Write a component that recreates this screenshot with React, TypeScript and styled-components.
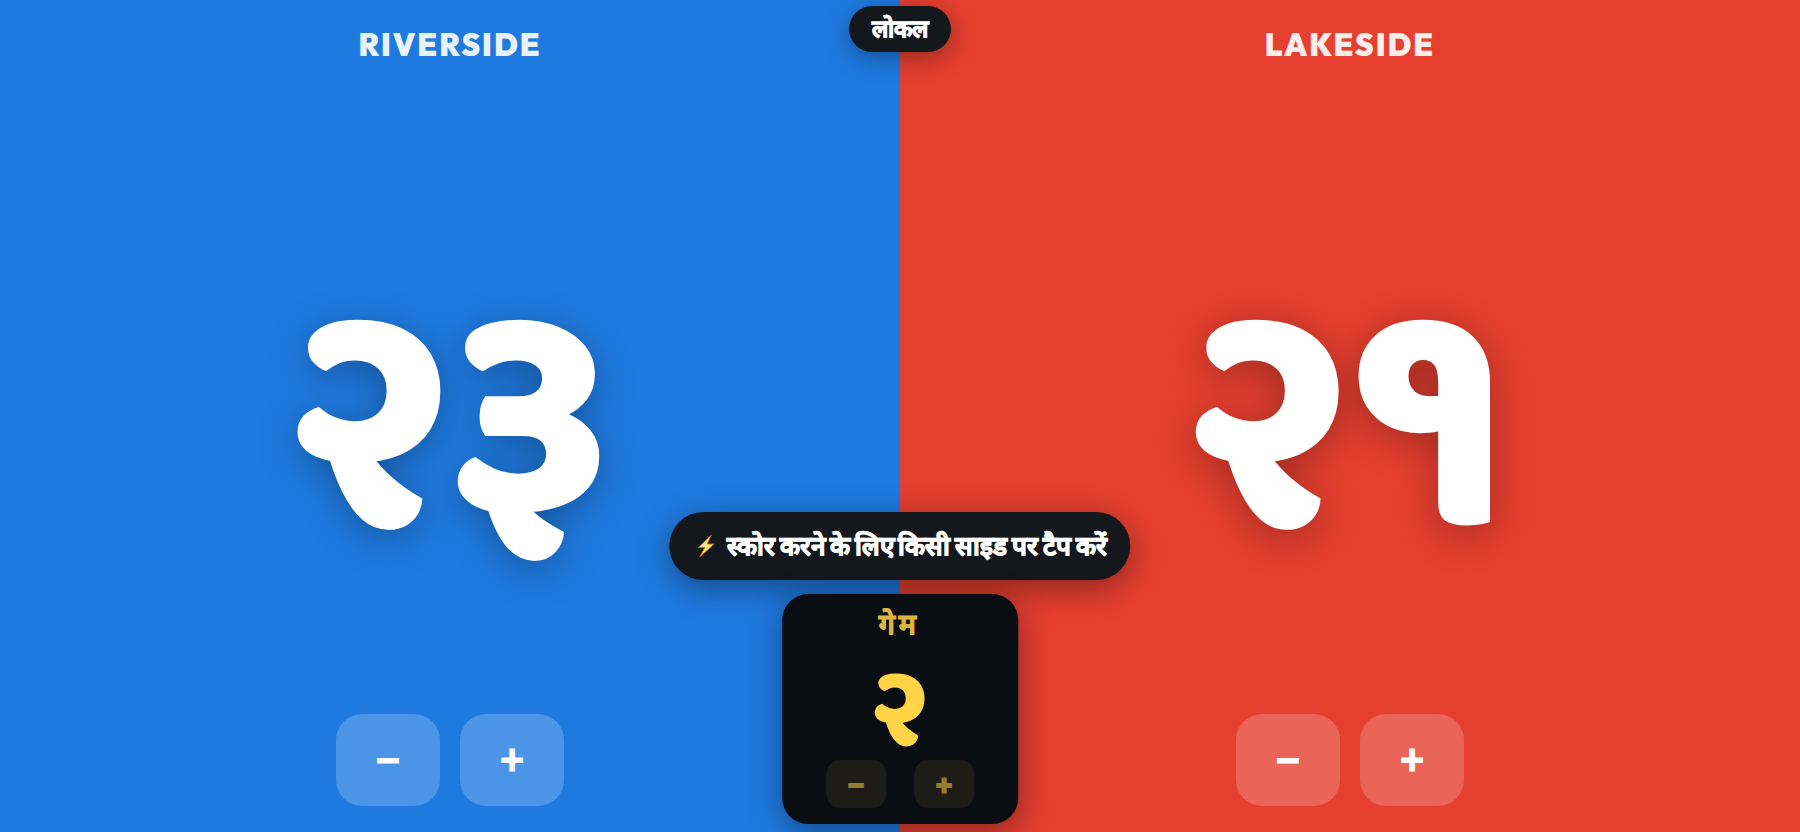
import React, { useState } from 'react';
import styled, { createGlobalStyle } from 'styled-components';

const GlobalStyle = createGlobalStyle`
  *, *::before, *::after { box-sizing: border-box; }
  body {
    margin: 0;
    font-family: 'Outfit', sans-serif;
  }
  button { font: inherit; cursor: pointer; }
`;

const numerals = `font-family: 'Outfit', 'Baloo 2', 'Noto Sans', sans-serif;`;

/* The fallback Devanagari face has no heavy cut, so a stroke thickens it. */
const heavyDevanagari = `-webkit-text-stroke: 1px currentColor;`;

const Board = styled.main`
  position: relative;
  display: grid;
  grid-template-columns: 1fr 1fr;
  min-height: 100vh;
  overflow: hidden;
`;

const Side = styled.section<{ $color: string }>`
  display: flex;
  flex-direction: column;
  align-items: center;
  padding: 24px 24px 26px;
  background: ${(p) => p.$color};
  color: #fff;
`;

const TeamName = styled.h2`
  margin: 0;
  font-size: 31px;
  line-height: 42px;
  font-weight: 900;
  letter-spacing: 2px;
  opacity: 0.9;
`;

const Score = styled.div`
  flex: 1;
  display: flex;
  align-items: center;
  padding-top: 30px;
  ${numerals}
  font-size: 316px;
  line-height: 316px;
  font-weight: 800;
  text-shadow: 0 8px 40px rgba(0, 0, 0, 0.3);
`;

const Controls = styled.div<{ $gap: number }>`
  display: flex;
  gap: ${(p) => p.$gap}px;
`;

const SideButton = styled.button`
  display: grid;
  place-items: center;
  width: 104px;
  height: 92px;
  padding: 0 0 2px;
  border: 0;
  border-radius: 26px;
  background: rgba(255, 255, 255, 0.2);
  color: #fff;
  font-size: 48px;
  font-weight: 600;
`;

const ModePill = styled.button`
  position: absolute;
  top: 6px;
  left: 50%;
  transform: translateX(-50%);
  height: 46px;
  padding: 0 23px 2px;
  border: 0;
  border-radius: 23px;
  background: #14171c;
  color: #fff;
  font-size: 24px;
  line-height: 44px;
  font-weight: 800;
  white-space: nowrap;
  ${heavyDevanagari}
  box-shadow: 0 6px 24px rgba(0, 0, 0, 0.35);
`;

const BottomStack = styled.div`
  position: absolute;
  bottom: 8px;
  left: 50%;
  transform: translateX(-50%);
  display: flex;
  flex-direction: column;
  align-items: center;
  gap: 14px;
`;

const Hint = styled.div`
  display: flex;
  align-items: center;
  gap: 8px;
  height: 68px;
  padding: 0 24px;
  border-radius: 34px;
  background: #14171c;
  color: #fff;
  font-size: 26px;
  line-height: 40px;
  font-weight: 800;
  white-space: nowrap;
  ${heavyDevanagari}
  box-shadow: 0 8px 32px rgba(0, 0, 0, 0.4);
`;

const GameCard = styled.section`
  display: flex;
  flex-direction: column;
  align-items: center;
  width: 236px;
  height: 230px;
  padding: 12px 0 16px;
  border-radius: 26px;
  background: #0a0d12;
  color: #ffd447;
  box-shadow: 0 8px 32px rgba(0, 0, 0, 0.4);
`;

const GameLabel = styled.h3`
  margin: 0;
  font-size: 28px;
  line-height: 36px;
  font-weight: 700;
  letter-spacing: 4px;
  ${heavyDevanagari}
  opacity: 0.85;
`;

const GameScore = styled.div`
  flex: 1;
  display: flex;
  align-items: center;
  padding-top: 6px;
  ${numerals}
  font-size: 110px;
  line-height: 104px;
  font-weight: 800;
`;

const GameButton = styled.button`
  display: grid;
  place-items: center;
  width: 60px;
  height: 48px;
  padding: 0;
  border: 0;
  border-radius: 14px;
  background: rgba(255, 212, 71, 0.08);
  color: rgba(255, 212, 71, 0.55);
  font-size: 32px;
  font-weight: 900;
`;

function Bolt() {
  return (
    <svg width="26" height="24" viewBox="-3 0 26 24" aria-hidden="true">
      <defs>
        <linearGradient id="bolt" x1="0" y1="0" x2="1" y2="1">
          <stop offset="0" stopColor="#f79a0b" />
          <stop offset="0.5" stopColor="#fff3a0" />
          <stop offset="1" stopColor="#f39a12" />
        </linearGradient>
      </defs>
      <path d="M15 1 2 13.500H8.500L3.500 23 18 10H11z" fill="url(#bolt)" stroke="#b87008" strokeWidth="1" strokeLinejoin="round" />
    </svg>
  );
}

const toHindi = (n: number) => new Intl.NumberFormat('hi-IN-u-nu-deva').format(n);

function Team({ name, color, initial }: { name: string; color: string; initial: number }) {
  const [score, setScore] = useState(initial);
  return (
    <Side $color={color}>
      <TeamName>{name}</TeamName>
      <Score>{toHindi(score)}</Score>
      <Controls $gap={20}>
        <SideButton onClick={() => setScore(Math.max(0, score - 1))}>−</SideButton>
        <SideButton onClick={() => setScore(score + 1)}>+</SideButton>
      </Controls>
    </Side>
  );
}

export default function App() {
  const [game, setGame] = useState(2);
  return (
    <Board lang="hi">
      <GlobalStyle />
      <Team name="RIVERSIDE" color="#1f7ae0" initial={23} />
      <Team name="LAKESIDE" color="#e53f2f" initial={21} />
      <ModePill>लोकल</ModePill>
      <BottomStack>
        <Hint>
          <Bolt />
          <span>स्कोर करने के लिए किसी साइड पर टैप करें</span>
        </Hint>
        <GameCard>
          <GameLabel>गेम</GameLabel>
          <GameScore>{toHindi(game)}</GameScore>
          <Controls $gap={28}>
            <GameButton onClick={() => setGame(Math.max(0, game - 1))}>−</GameButton>
            <GameButton onClick={() => setGame(game + 1)}>+</GameButton>
          </Controls>
        </GameCard>
      </BottomStack>
    </Board>
  );
}
